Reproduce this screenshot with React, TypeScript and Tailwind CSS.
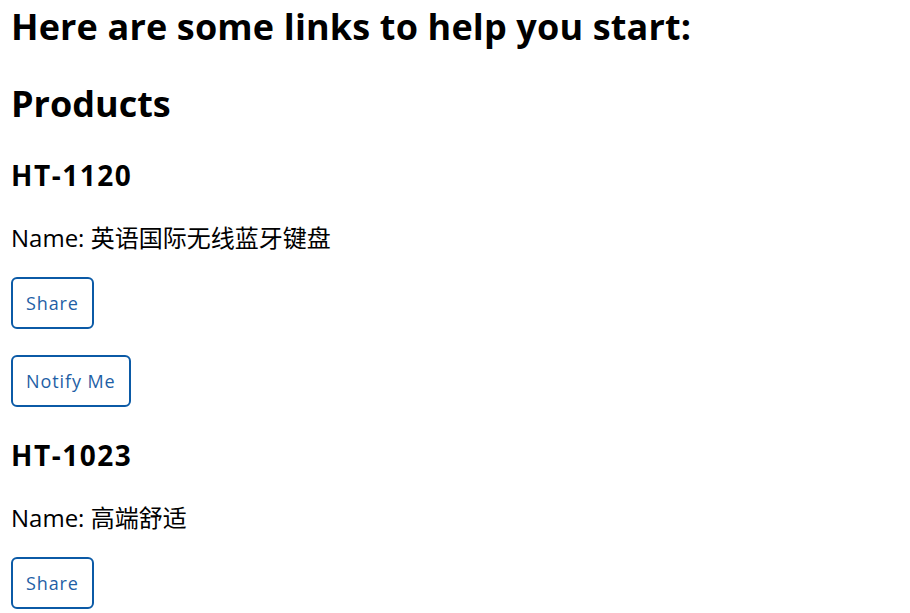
const products = [
  { id: 'HT-1120', name: '英语国际无线蓝牙键盘', notify: true },
  { id: 'HT-1023', name: '高端舒适', notify: false },
];

function ActionButton({ label }: { label: string }) {
  return (
    <button className="block h-[52px] px-[13px] border-2 border-[#0b5aa6] rounded-[6px] bg-white text-[18px] tracking-[0.9px] text-[#1f5fa6] leading-none">
      {label}
    </button>
  );
}

export default function App() {
  return (
    <div
      className="w-[910px] h-[613px] overflow-hidden bg-white text-black pl-[11px] pt-[5px]"
      style={{ fontFamily: '"Open Sans", "Noto Sans CJK SC", sans-serif' }}
    >
      <h1 className="text-[36px] font-bold leading-[44px] tracking-[0.15px]">Here are some links to help you start:</h1>
      <h2 className="mt-[33px] text-[36px] font-bold leading-[44px]">Products</h2>

      {products.map((p, i) => (
        <div key={p.id} className={i === 0 ? 'mt-[31px]' : 'mt-[30px]'}>
          <h3 className="text-[28px] font-bold leading-[36px] tracking-[1.5px]">{p.id}</h3>
          <p className="mt-[29px] text-[24px] leading-[32px]">Name: {p.name}</p>
          <div className="mt-[23px]">
            <ActionButton label="Share" />
          </div>
          {p.notify && (
            <div className="mt-[26px]">
              <ActionButton label="Notify Me" />
            </div>
          )}
        </div>
      ))}
    </div>
  );
}
